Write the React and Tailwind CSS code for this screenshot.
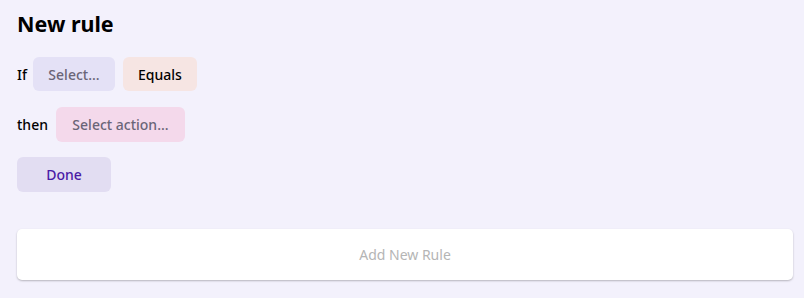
export default function App() {
  return (
    <div className="min-h-[298px] w-[804px] bg-[#f3f1fc] px-[17px] pt-[9px] text-black" style={{ fontFamily: '"Noto Sans", sans-serif' }}>
      <h1 className="text-[21.5px] font-bold leading-[30px]">New rule</h1>
      <div className="mt-[18px] flex items-center">
        <span className="text-[14px] font-medium mr-[6px]">If</span>
        <button className="h-[34px] w-[82px] rounded-[6px] bg-[#e4e1f6] text-[14px] font-medium text-[#6a6578]">Select...</button>
        <button className="ml-[8px] h-[34px] w-[74px] rounded-[6px] bg-[#f6e5e3] text-[14px] font-medium text-black">Equals</button>
      </div>
      <div className="mt-[16px] flex items-center">
        <span className="text-[14px] font-medium mr-[8px]">then</span>
        <button className="h-[35px] w-[129px] rounded-[6px] bg-[#f4d9eb] text-[14px] font-medium text-[#6a6578]">Select action...</button>
      </div>
      <button className="mt-[15px] h-[35px] w-[94px] rounded-[6px] bg-[#e2ddf2] text-[14px] font-medium text-[#4a1aa6]">Done</button>
      <div className="mt-[37px] flex h-[51px] w-[776px] items-center justify-center rounded-[5px] bg-white shadow-[0_1px_2px_rgba(0,0,0,0.25)]">
        <span className="text-[14px] text-[#b5b5b5]">Add New Rule</span>
      </div>
    </div>
  );
}
